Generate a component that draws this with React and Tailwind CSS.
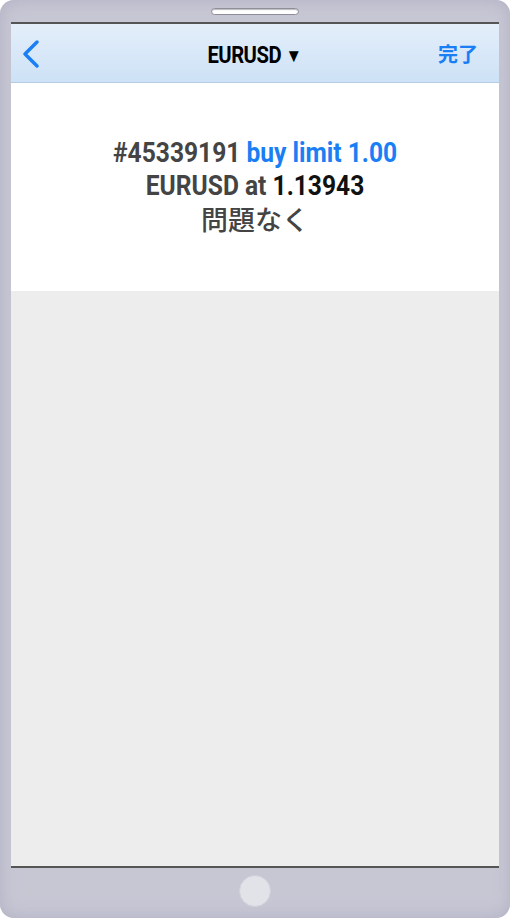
export default function App() {
  return (
    <div className="w-[510px] h-[918px] bg-[#c7c7d4] rounded-[14px] shadow-[inset_0_0_18px_#b0b0c4] flex flex-col px-[11px] overflow-hidden font-['Roboto',sans-serif]">
      {/* top bezel with speaker slot */}
      <div className="h-[22px] flex justify-center pt-[8px]">
        <div className="w-[88px] h-[7px] rounded-full bg-white border border-[#8e8e9a] shadow-[inset_0_1px_1px_#bbb]" />
      </div>

      {/* screen */}
      <div className="flex-1 flex flex-col border-t-2 border-b-2 border-[#555] bg-[#ededed]">
        <div className="h-[59px] grid grid-cols-[1fr_auto_1fr] items-center px-[10px] bg-gradient-to-b from-[#e4eefa] to-[#cde2f6] border-b border-[#b7cde2]">
          <svg width="22" height="30" viewBox="0 0 22 30" className="ml-[1px]">
            <path d="M15 4 L3 16 L15 28" fill="none" stroke="#1a7ef5" strokeWidth="3.4" strokeLinecap="round" strokeLinejoin="round" />
          </svg>
          <div className="inline-block scale-x-[0.88] text-[23px] font-bold text-black tracking-tight whitespace-nowrap relative top-[3px]">
            EURUSD <span className="text-[19px] relative top-[-1px]">▼</span>
          </div>
          <div className="justify-self-end text-[20px] font-bold text-[#1a7ef5] pr-[11px] font-['Noto_Sans_CJK_JP',sans-serif] relative top-[1px]">完了</div>
        </div>

        <div className="h-[208px] bg-white flex flex-col items-center pt-[54px] text-[#444]">
          <div className="leading-[33px] text-[27px] font-bold inline-block scale-x-[0.91] whitespace-nowrap">
            #45339191 <span className="text-[#1a7ef5]">buy limit 1.00</span>
          </div>
          <div className="leading-[33px] text-[27px] font-bold inline-block scale-x-[0.91] whitespace-nowrap">
            EURUSD at <span className="text-[#111]">1.13943</span>
          </div>
          <div className="leading-[32px] text-[27px] font-medium font-['Noto_Sans_CJK_JP',sans-serif] text-[#444]">
            問題なく
          </div>
        </div>
      </div>

      {/* bottom bezel with home button */}
      <div className="h-[50px] flex justify-center pt-[7px]">
        <div className="w-[32px] h-[32px] rounded-full bg-[#e2e2e9] border border-[#d0d0da]" />
      </div>
    </div>
  );
}
